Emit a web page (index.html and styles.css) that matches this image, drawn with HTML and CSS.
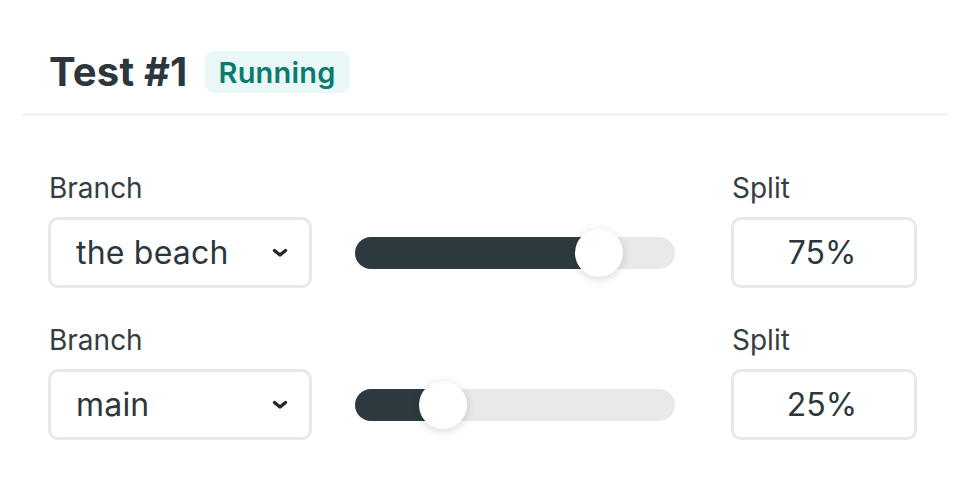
FILE: index.html
```html
<!DOCTYPE html>
<html>
<head>
<meta charset="utf-8">
<link rel="stylesheet" href="styles.css">
</head>
<body>
<div class="card">
  <div class="header">
    <h1 class="title">Test #1</h1>
    <span class="badge">Running</span>
  </div>
  <div class="rows">
    <div class="row">
      <div class="field branch">
        <div class="label">Branch</div>
        <div class="select">
          <span class="select-text">the beach</span>
          <svg class="chevron" width="16" height="10" viewBox="0 0 16 10"><path d="M2.5 2.5 L8 7 L13.5 2.5" fill="none" stroke="#1f2a30" stroke-width="3.4" stroke-linecap="round" stroke-linejoin="round"/></svg>
        </div>
      </div>
      <div class="slider">
        <div class="track">
          <div class="fill" style="width: 244px"></div>
          <div class="thumb" style="left: 220px"></div>
        </div>
      </div>
      <div class="field split">
        <div class="label">Split</div>
        <div class="value">75%</div>
      </div>
    </div>
    <div class="row">
      <div class="field branch">
        <div class="label">Branch</div>
        <div class="select">
          <span class="select-text">main</span>
          <svg class="chevron" width="16" height="10" viewBox="0 0 16 10"><path d="M2.5 2.5 L8 7 L13.5 2.5" fill="none" stroke="#1f2a30" stroke-width="3.4" stroke-linecap="round" stroke-linejoin="round"/></svg>
        </div>
      </div>
      <div class="slider">
        <div class="track">
          <div class="fill" style="width: 88px"></div>
          <div class="thumb" style="left: 64px"></div>
        </div>
      </div>
      <div class="field split">
        <div class="label">Split</div>
        <div class="value">25%</div>
      </div>
    </div>
  </div>
</div>
</body>
</html>
```
FILE: styles.css
```css
* { box-sizing: border-box; }
html, body { margin: 0; padding: 0; background: #ffffff; }
body {
  font-family: Inter, "Noto Sans", "Liberation Sans", sans-serif;
  color: #2b373d;
  width: 972px;
  height: 500px;
  overflow: hidden;
}
.card {
  padding: 0 24px 0 22px;
}
.header {
  display: flex;
  align-items: center;
  padding: 51px 0 20px 27px;
  border-bottom: 3px solid #f3f5f5;
}
.title {
  margin: 0;
  font-size: 40px;
  line-height: 42px;
  font-weight: 700;
  color: #2b373d;
  letter-spacing: 0.2px;
}
.badge {
  margin-left: 17px;
  height: 42px;
  display: flex;
  align-items: center;
  padding: 0 14px;
  border-radius: 9px;
  background: #e9f8f7;
  color: #0b7b70;
  font-size: 29px;
  font-weight: 600;
  letter-spacing: 0.2px;
}
.rows {
  padding: 55px 31px 0 26px;
  display: flex;
  flex-direction: column;
  gap: 35px;
}
.row {
  display: flex;
  align-items: flex-end;
}
.field {
  display: flex;
  flex-direction: column;
}
.label {
  font-size: 28px;
  line-height: 34px;
  color: #363d40;
  margin-bottom: 12px;
  padding-left: 1px;
}
.branch { width: 264px; }
.select {
  height: 71px;
  border: 3px solid #e6e9eb;
  border-radius: 10px;
  display: flex;
  align-items: center;
  justify-content: space-between;
  padding: 0 21px 0 25px;
}
.select-text {
  font-size: 32px;
  color: #2b373d;
  letter-spacing: 0.2px;
}
.chevron { display: block; }
.slider {
  margin-left: 43px;
  width: 320px;
  height: 71px;
  display: flex;
  align-items: center;
}
.track {
  position: relative;
  width: 100%;
  height: 32px;
  border-radius: 16px;
  background: #e8eaea;
}
.fill {
  height: 32px;
  border-radius: 16px;
  background: #2d3a40;
}
.thumb {
  position: absolute;
  top: -8px;
  width: 48px;
  height: 48px;
  border-radius: 50%;
  background: #ffffff;
  box-shadow: 0 2px 8px rgba(0, 0, 0, 0.16);
}
.split {
  margin-left: 56px;
  width: 186px;
}
.value {
  height: 71px;
  border: 3px solid #e6e9eb;
  border-radius: 10px;
  display: flex;
  align-items: center;
  justify-content: center;
  font-size: 32px;
  color: #2b373d;
  padding-right: 4px;
}
```
